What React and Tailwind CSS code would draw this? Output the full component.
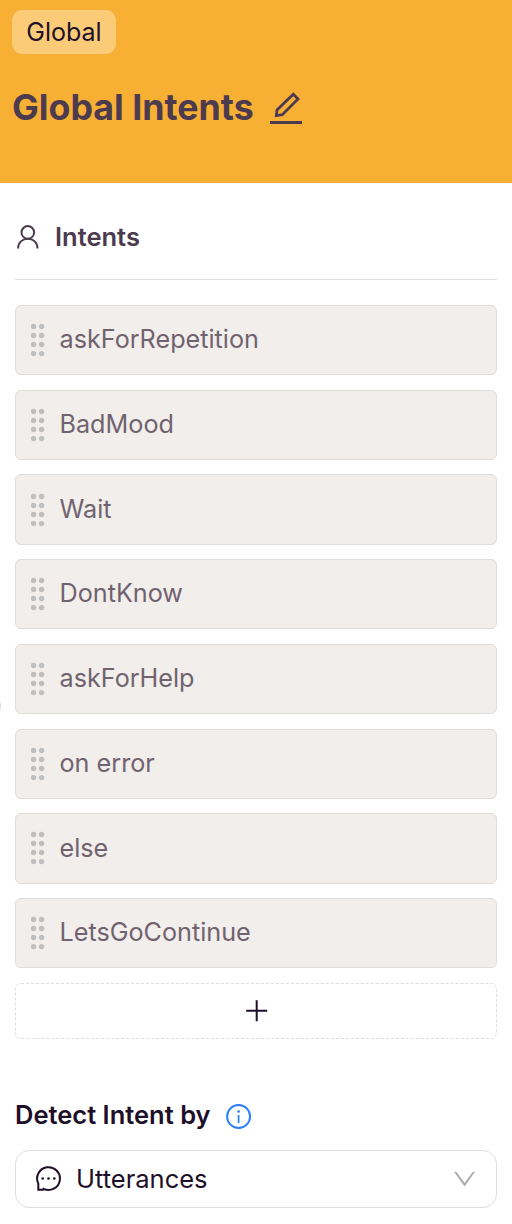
const intents = ['askForRepetition', 'BadMood', 'Wait', 'DontKnow', 'askForHelp', 'on error', 'else', 'LetsGoContinue'];

function EditIcon() {
  return (
    <svg className="mt-0.5 h-8 w-8 shrink-0" viewBox="0 0 32 32" fill="none" stroke="currentColor">
      <path d="M23.3 2.3 L28 7 L12.3 22.7 L6.3 23.6 L7 17.9 Z" strokeWidth="2.8" />
      <path d="M0 30.5 H32" strokeWidth="3" />
    </svg>
  );
}

function PersonIcon() {
  return (
    <svg className="h-6 w-[22px] shrink-0" viewBox="0 0 22 24" fill="none" stroke="currentColor" strokeWidth="2">
      <circle cx="10.8" cy="7.4" r="6.3" />
      <path d="M1.1 23.4 C1.1 17.5 5.4 13.8 10.8 13.8 S20.5 17.5 20.5 23.4" />
    </svg>
  );
}

function DragHandle() {
  return (
    <svg className="h-[34px] w-3.5 shrink-0" viewBox="0 0 14 34" fill="#bfbfbf">
      {[3.5, 12.5, 21.5, 30.6].map((y) => (
        <g key={y}>
          <circle cx="2.5" cy={y} r="2.7" />
          <circle cx="10.6" cy={y} r="2.7" />
        </g>
      ))}
    </svg>
  );
}

function InfoIcon() {
  return (
    <svg className="mt-[3px] h-[26px] w-[26px] shrink-0" viewBox="0 0 26 26" fill="none" stroke="#2a7fff">
      <circle cx="12.6" cy="12.5" r="11.5" strokeWidth="2" />
      <path d="M12.6 11 V19" strokeWidth="1.7" />
      <circle cx="12.6" cy="7.5" r="1.3" fill="#2a7fff" stroke="none" />
    </svg>
  );
}

function ChatIcon() {
  return (
    <svg className="h-[26px] w-[26px] shrink-0" viewBox="0 0 26 26" fill="none" stroke="currentColor">
      <path d="M2.3 23.8 V17.6 A11.4 11.4 0 1 1 7.5 22.8 L7 23.8 Z" strokeWidth="2" />
      <g fill="currentColor" stroke="none">
        <circle cx="6.7" cy="12.5" r="1.3" />
        <circle cx="12.5" cy="12.5" r="1.3" />
        <circle cx="18.3" cy="12.5" r="1.3" />
      </g>
    </svg>
  );
}

export default function App() {
  return (
    <div className="relative flex h-[1224px] w-[512px] flex-col overflow-hidden bg-white font-['Inter',sans-serif] text-[25.5px] text-[#200f29]">
      <header className="flex h-[183px] shrink-0 flex-col items-start bg-[#f8b034] px-3 pt-2.5">
        <span className="flex h-11 w-[104px] items-center justify-center rounded-[10px] bg-[#fccb78] pt-0.5 text-[25px]">Global</span>
        <div className="mt-[31px] flex h-11 items-center text-[#4c3b4f]">
          <h1 className="w-[258px] whitespace-nowrap pt-0.5 text-[35.75px] font-bold">Global Intents</h1>
          <EditIcon />
        </div>
      </header>

      <main className="flex flex-col px-[15px]">
        <div className="flex h-[97px] items-center border-b border-[#dedede] pt-3 pl-0.5 text-[#4c3b4f]">
          <PersonIcon />
          <h2 className="ml-4 font-semibold">Intents</h2>
        </div>

        <ul className="mt-[25px] flex flex-col gap-[14.5px]">
          {intents.map((name) => (
            <li key={name} className="flex h-[70.22px] items-center rounded-md border border-[#dfdcda] bg-[#f2eeeb] pl-[15px] text-[25.2px] text-[#70636f]">
              <DragHandle />
              <span className="ml-[14.5px] whitespace-nowrap">{name}</span>
            </li>
          ))}
        </ul>

        <button className="mt-[14.5px] flex h-14 items-center justify-center rounded-md border border-dashed border-[#dddddd]">
          <svg className="ml-px h-[22px] w-[22px]" viewBox="0 0 22 22" stroke="currentColor" strokeWidth="2">
            <path d="M10.7 0.3 V21.3 M0.2 10.8 H21.2" />
          </svg>
        </button>

        <div className="mt-[58px] flex h-[38px] items-center">
          <h2 className="w-[211px] whitespace-nowrap pb-0.5 font-semibold">Detect Intent by</h2>
          <InfoIcon />
        </div>

        <div className="mt-[15px] flex h-[58px] items-center rounded-[14px] border border-[#dedede] pr-[21px] pl-5">
          <ChatIcon />
          <span className="ml-3.5 grow">Utterances</span>
          <svg className="h-4 w-[22px]" viewBox="0 0 22 16" fill="#b0adb3">
            <path d="M0.9 0.8 H3.4 L11.6 11.8 L19.8 0.8 H22 L12.4 14.4 Q11.6 15.5 10.8 14.4 Z" />
          </svg>
        </div>
      </main>

      <span className="absolute top-[694px] -left-[23px] h-6 w-6 rounded-full border border-[#d8d8d8]" />
    </div>
  );
}
